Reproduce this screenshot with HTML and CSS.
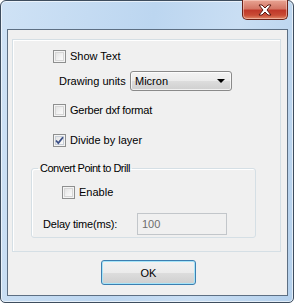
FILE: index.html
```html
<!DOCTYPE html>
<html>
<head>
<meta charset="utf-8">
<link rel="stylesheet" href="styles.css">
</head>
<body>
<div class="window">
  <div class="titlebar">
    <div class="close-btn">
      <svg width="16" height="12" viewBox="0 0 16 12">
        <path d="M2 1 L5 1 L8 4 L11 1 L14 1 L10 6 L14 11 L11 11 L8 8 L5 11 L2 11 L6 6 Z" fill="#fff" stroke="#5a1a12" stroke-width="1" stroke-linejoin="round"/>
      </svg>
    </div>
  </div>
  <div class="client">
    <div class="panel">
      <label class="check-row r1"><span class="cb"></span><span>Show Text</span></label>
      <div class="units-row">
        <span class="units-label">Drawing units</span>
        <div class="select"><span>Micron</span><span class="arrow"></span></div>
      </div>
      <label class="check-row r2"><span class="cb"></span><span class="tight">Gerber dxf format</span></label>
      <label class="check-row r3"><span class="cb checked"><svg width="11" height="11" viewBox="0 0 11 11"><path d="M2 5.5 L4.3 8 L9 2.2" fill="none" stroke="#3b4f86" stroke-width="1.8"/></svg></span><span>Divide by layer</span></label>
      <fieldset class="group">
        <legend>Convert Point to Drill</legend>
        <label class="check-row enable"><span class="cb"></span><span>Enable</span></label>
        <div class="delay-row">
          <span class="delay-label">Delay time(ms):</span>
          <div class="input disabled">100</div>
        </div>
      </fieldset>
    </div>
    <div class="btn-row">
      <div class="button">OK</div>
    </div>
  </div>
</div>
</body>
</html>
```
FILE: styles.css
```css
* { box-sizing: border-box; }
html, body { margin: 0; padding: 0; }
body {
  width: 294px;
  height: 303px;
  background: #fff;
  font-family: "Liberation Sans", Arial, sans-serif;
  font-size: 11px;
  color: #000;
  overflow: hidden;
}
.window {
  width: 294px;
  height: 303px;
  border: 1px solid #3e4d5e;
  border-radius: 6px 6px 5px 5px;
  background: linear-gradient(100deg, #cfe2f5 0%, #bcd6f0 45%, #c9def3 70%, #b4d0ec 100%);
  box-shadow: inset 0 0 0 1px rgba(255,255,255,0.6);
  display: flex;
  flex-direction: column;
}
.titlebar {
  height: 28px;
  display: flex;
  justify-content: flex-end;
  align-items: flex-start;
  padding-right: 5px;
}
.close-btn {
  width: 46px;
  height: 20px;
  margin-top: -1px;
  border: 1px solid #6b2319;
  border-top: none;
  border-radius: 0 0 5px 5px;
  background: linear-gradient(#e8a493 0%, #d47766 45%, #c0392a 55%, #c94c36 80%, #e08a6a 100%);
  box-shadow: inset 0 0 0 1px rgba(255,220,210,0.5);
  display: flex;
  align-items: center;
  justify-content: center;
}
.close-btn svg { display: block; }
.client {
  margin-left: 6px;
  width: 281px;
  height: 267px;
  border: 1px solid #5d6f83;
  background: #f0f0f0;
  display: flex;
  flex-direction: column;
}
.panel {
  margin: 9px 0 0 4px;
  width: 269px;
  height: 213px;
  border: 1px solid #d5dfe5;
  box-shadow: inset 1px 1px 0 #fff;
  display: flex;
  flex-direction: column;
  align-items: flex-start;
}
.check-row {
  display: flex;
  align-items: center;
  gap: 4px;
  height: 13px;
  line-height: 13px;
  margin-left: 40px;
}
.tight { letter-spacing: -0.25px; }
.r1 { margin-top: 10px; }
.r2 { margin-top: 13px; }
.r3 { margin-top: 17px; }
.cb {
  width: 13px;
  height: 13px;
  border: 1px solid #8e8f8f;
  background: linear-gradient(135deg, #dcdcdc 0%, #f4f4f4 60%, #fff 100%);
  box-shadow: inset 0 0 0 1px #f4f4f4, inset 0 0 0 2px #d6d6d6;
  display: flex;
  align-items: center;
  justify-content: center;
  flex: none;
}
.cb.checked { box-shadow: inset 0 0 0 1px #f4f4f4, inset 0 0 0 2px #c8cfd8; }
.cb svg { display: block; }
.units-row {
  margin-top: 8px;
  margin-left: 46px;
  display: flex;
  align-items: center;
  height: 20px;
}
.units-label { width: 71px; }
.select {
  width: 102px;
  height: 20px;
  border: 1px solid #8a8a8a;
  border-radius: 3px;
  background: linear-gradient(#f3f3f3 0%, #ebebeb 50%, #dddddd 51%, #cfcfcf 100%);
  box-shadow: inset 0 0 0 1px rgba(255,255,255,0.7);
  display: flex;
  align-items: center;
  justify-content: space-between;
  padding: 0 6px 0 4px;
}
.arrow {
  width: 0;
  height: 0;
  border-left: 4px solid transparent;
  border-right: 4px solid transparent;
  border-top: 4px solid #000;
}
.group {
  margin: 15px 0 0 18px;
  padding: 0 0 2px 0;
  width: 225px;
  border: 1px solid #d5dfe5;
  border-radius: 3px;
  box-shadow: inset 1px 1px 0 #fff;
  min-width: 0;
}
.group legend {
  margin-left: 6px;
  padding: 0 2px;
  line-height: 13px;
  letter-spacing: -0.5px;
}
.enable { margin-left: 30px; margin-top: 11px; }
.delay-row {
  margin-top: 14px;
  margin-left: 11px;
  display: flex;
  align-items: center;
  height: 22px;
}
.delay-label { width: 94px; letter-spacing: -0.2px; }
.input {
  width: 90px;
  height: 22px;
  border: 1px solid #c2c6ca;
  background: #f0f0f0;
  color: #6d6d6d;
  padding-left: 4px;
  line-height: 20px;
}
.btn-row {
  margin-top: 8px;
  padding-left: 93px;
  display: flex;
}
.button {
  width: 95px;
  height: 25px;
  border: 1px solid #3c7fb1;
  border-radius: 3px;
  background: linear-gradient(#f2f2f2 0%, #ebebeb 50%, #dddddd 51%, #cfcfcf 100%);
  box-shadow: inset 0 0 0 1px #a6e4f8;
  display: flex;
  align-items: center;
  justify-content: center;
}
```
